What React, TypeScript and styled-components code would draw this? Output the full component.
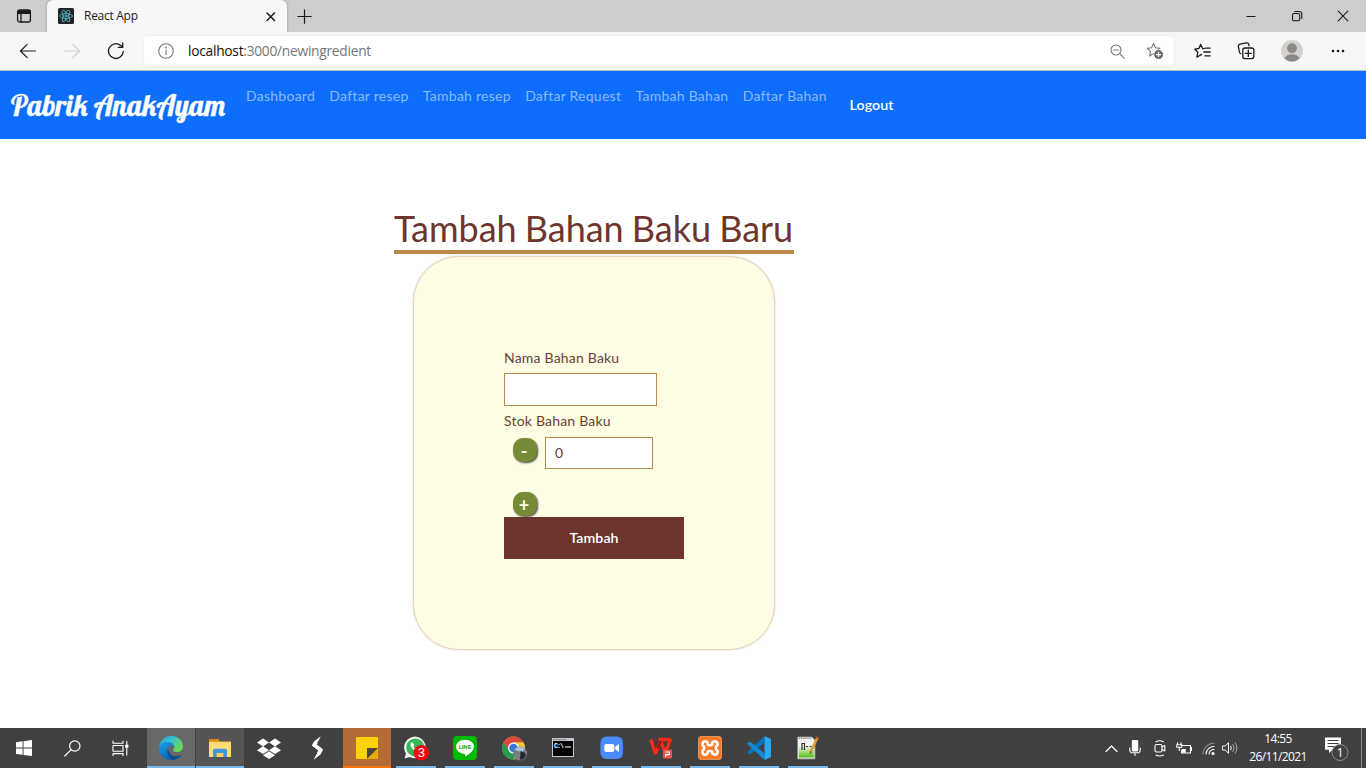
import React from 'react';
import styled, { createGlobalStyle } from 'styled-components';

const GlobalStyle = createGlobalStyle`
  *, *::before, *::after { box-sizing: border-box; }
  html, body { margin: 0; padding: 0; background: #fff; overflow: hidden; }
  svg { display: block; flex: none; }
  button, input { font-family: inherit; border-radius: 0; margin: 0; }
`;

const Screen = styled.div`
  display: flex;
  flex-direction: column;
  width: 1366px;
  height: 768px;
  font-family: Lato, 'Open Sans', sans-serif;
`;

/* ---------- browser chrome ---------- */
const TabStrip = styled.header`
  display: flex;
  height: 32px;
  background: #cdcdcd;
  font-family: 'Open Sans', 'Noto Sans', sans-serif;
`;

const Slot = styled.span<{ $w: number }>`
  display: flex;
  flex: none;
  align-items: center;
  justify-content: center;
  width: ${(p) => p.$w}px;
  height: 100%;
`;

const Tab = styled.div`
  display: flex;
  align-items: center;
  width: 240px;
  padding: 0 11px;
  background: #f7f7f7;
  border-radius: 6px 6px 0 0;
  box-shadow: 0 0 3px rgba(0, 0, 0, 0.3);
  clip-path: inset(0 -4px 0 -4px);
`;

const TabTitle = styled.span`
  flex: 1;
  margin-left: 10px;
  padding-bottom: 1px;
  font-size: 12px;
  letter-spacing: -0.28px;
  color: #1c1c1c;
`;

const WindowControls = styled.div`
  display: flex;
  margin-left: auto;
`;

const Toolbar = styled.div`
  display: flex;
  align-items: center;
  height: 39px;
  padding: 0 6px;
  background: #f7f7f7;
  border-bottom: 1px solid #b9bcc1;
  font-family: 'Open Sans', 'Noto Sans', sans-serif;
`;

const AddressBar = styled.div`
  display: flex;
  align-items: center;
  width: 1030px;
  height: 30px;
  margin: 0 6px;
  background: #fff;
  border-radius: 4px;
  box-shadow: 0 0 2px rgba(0, 0, 0, 0.08);
`;

const Url = styled.span`
  flex: 1;
  padding-bottom: 1px;
  font-size: 13.8px;
  letter-spacing: -0.28px;
  color: #767676;
`;

const UrlHost = styled.span`
  color: #111;
`;

/* ---------- site navigation ---------- */
const Navbar = styled.nav`
  display: flex;
  height: 68px;
  padding-left: 11px;
  background: #0d6efd;
`;

const Brand = styled.a`
  width: 235px;
  padding-top: 14px;
  font-family: Lobster, cursive;
  font-size: 28.8px;
  line-height: 40px;
  white-space: nowrap;
  color: #fff;
  -webkit-text-stroke: 0.35px #fff;
`;

const NavLinks = styled.div`
  display: flex;
  gap: 14.3px;
  padding-top: 14px;
`;

const NavLink = styled.a`
  font-size: 14px;
  letter-spacing: 0.26px;
  line-height: 22px;
  white-space: nowrap;
  color: #8abaff;
`;

const Logout = styled.a`
  margin-left: 22.6px;
  padding-top: 23px;
  font-size: 14.2px;
  font-weight: 600;
  letter-spacing: 0.1px;
  line-height: 22px;
  color: #fff;
`;

/* ---------- form ---------- */
const Main = styled.main`
  display: flex;
  flex: 1;
  flex-direction: column;
  align-items: center;
  width: 400px;
  margin-left: 394px;
  padding-top: 68px;
`;

const Title = styled.h1`
  width: 400px;
  height: 47px;
  margin: 0;
  border-bottom: 4px solid #ba884e;
  font-size: 36px;
  font-weight: 400;
  letter-spacing: -0.04px;
  word-spacing: -0.9px;
  line-height: 43px;
  white-space: nowrap;
  color: #6d352b;
`;

const Card = styled.form`
  display: flex;
  flex-direction: column;
  align-items: flex-start;
  width: 362px;
  height: 394px;
  margin-top: 2px;
  padding: 90px 90px 0;
  background: #fffde4;
  border: 1px solid #e6d2c2;
  border-radius: 46px;
  box-shadow: 0 0 2px rgba(186, 136, 100, 0.4);
`;

const Label = styled.label<{ $top?: number }>`
  margin-top: ${(p) => p.$top ?? 0}px;
  font-size: 14px;
  letter-spacing: 0.2px;
  line-height: 22px;
  color: #66403b;
`;

const Field = styled.input<{ $w: number; $h: number }>`
  width: ${(p) => p.$w}px;
  height: ${(p) => p.$h}px;
  padding: 0 8px 1px 9px;
  background: #fff;
  border: 1px solid #ba884e;
  font-size: 14px;
  color: #66403b;
  outline: none;
`;

const NameField = styled(Field)`
  margin-top: 4px;
`;

const StockRow = styled.div`
  display: flex;
  gap: 8px;
  margin: 5px 0 23px 9px;
`;

const RoundButton = styled.button<{ $top?: number; $left?: number }>`
  display: flex;
  align-items: center;
  justify-content: center;
  width: 24px;
  height: 24px;
  margin: ${(p) => p.$top ?? 0}px 0 0 ${(p) => p.$left ?? 0}px;
  padding: 2px 2px 0 0;
  background: #758b36;
  border: 0;
  border-radius: 10px;
  box-shadow: 1px 1px 2px rgba(40, 40, 40, 0.85);
  font-size: 18px;
  font-weight: 700;
  line-height: 20px;
  color: #fffde4;
`;

const Submit = styled.button`
  width: 180px;
  height: 42px;
  margin-top: 1px;
  padding: 0 0 1px;
  background: #6d352d;
  border: 0;
  font-size: 14.2px;
  font-weight: 600;
  letter-spacing: 0.05px;
  color: #fff;
`;

/* ---------- taskbar ---------- */
const Taskbar = styled.footer`
  display: flex;
  height: 40px;
  background: #404040;
  font-family: 'Open Sans', 'Noto Sans', sans-serif;
  color: #fff;
`;

const Apps = styled.div`
  display: flex;
  gap: 1px;
  margin-left: 3px;
`;

const AppButton = styled.div<{ $bg?: string; $bar?: string; $full?: boolean }>`
  display: flex;
  align-items: center;
  justify-content: center;
  width: 48px;
  height: 40px;
  background-color: ${(p) => p.$bg ?? 'transparent'};
  background-image: linear-gradient(${(p) => p.$bar ?? 'transparent'}, ${(p) => p.$bar ?? 'transparent'});
  background-size: ${(p) => (p.$full ? '48px' : '40px')} 2px;
  background-position: center bottom;
  background-repeat: no-repeat;
`;

const Tray = styled.div`
  display: flex;
  align-items: center;
  margin-left: auto;
`;

const Clock = styled.div`
  width: 74px;
  padding-left: 2px;
  font-size: 12px;
  line-height: 18px;
  letter-spacing: -0.6px;
  text-align: center;
  white-space: nowrap;
`;

const ShowDesktop = styled.div`
  width: 5px;
  height: 40px;
  margin-left: 1px;
  border-left: 1px solid #8b8b8b;
`;

type IconProps = { w: number; h?: number; color?: string; sw?: number; children: React.ReactNode };
const Icon = ({ w, h = w, color = '#1a1a1a', sw = 1.1, children }: IconProps) => (
  <svg width={w} height={h} viewBox={`0 0 ${w} ${h}`} fill="none" stroke={color} strokeWidth={sw} strokeLinecap="round" strokeLinejoin="round">
    {children}
  </svg>
);

const STAR = 'M7.5 1.5 L9.4 5.7 L14 6.2 L10.5 9.3 L11.5 14 L7.5 11.6 L3.5 14 L4.5 9.3 L1 6.2 L5.6 5.7 Z';

const BrowserTabs = () => (
  <TabStrip>
    <Slot $w={47}>
      <Icon w={16} sw={1.3}>
        <rect x="1.6" y="2" width="12.8" height="12" rx="2" />
        <path d="M2 3h12v2.4H2z" fill="#1a1a1a" />
        <path d="M5 5v9" />
      </Icon>
    </Slot>
    <Tab>
      <Icon w={16} color="#53b7d3" sw={0.8}>
        <rect width="16" height="16" rx="1.5" fill="#222" stroke="none" />
        <ellipse cx="8" cy="8" rx="6.4" ry="2.5" />
        <ellipse cx="8" cy="8" rx="6.4" ry="2.5" transform="rotate(60 8 8)" />
        <ellipse cx="8" cy="8" rx="6.4" ry="2.5" transform="rotate(120 8 8)" />
        <circle cx="8" cy="8" r="1" fill="#53b7d3" />
      </Icon>
      <TabTitle>React App</TabTitle>
      <Icon w={11} sw={1.5}>
        <path d="M2 2l7.5 7.5M9.5 2L2 9.5" />
      </Icon>
    </Tab>
    <Slot $w={35}>
      <Icon w={15} sw={1.2}>
        <path d="M7.5 .8v13.4M.8 7.5h13.4" />
      </Icon>
    </Slot>
    <WindowControls>
      <Slot $w={46}>
        <Icon w={12} sw={1}><path d="M1.5 6.5h9" strokeLinecap="butt" /></Icon>
      </Slot>
      <Slot $w={46}>
        <Icon w={12} sw={1.1}>
          <rect x="1.5" y="3.5" width="7.2" height="7.2" rx="1.5" />
          <path d="M3.8 1.5H8.5a2.3 2.3 0 0 1 2.3 2.3v4.7" />
        </Icon>
      </Slot>
      <Slot $w={46}>
        <Icon w={12} sw={1.1}><path d="M1.2 1.2l9.6 9.6M10.8 1.2l-9.6 9.6" /></Icon>
      </Slot>
    </WindowControls>
  </TabStrip>
);

const BrowserToolbar = () => (
  <Toolbar>
    <Slot $w={44}><Icon w={18} sw={1.2}><path d="M16.5 9h-15M8.2 2.3L1.5 9l6.7 6.7" /></Icon></Slot>
    <Slot $w={44}><Icon w={18} sw={1.2} color="#cfcfcf"><path d="M1.5 9h15M9.8 2.3L16.5 9l-6.7 6.7" /></Icon></Slot>
    <Slot $w={44}>
      <Icon w={18} sw={1.3}>
        <path d="M16.3 9.5A7.4 7.4 0 1 1 13.7 3.4L15.5 5" />
        <path d="M15.7 1v4.4h-4.4" />
      </Icon>
    </Slot>
    <AddressBar>
      <Slot $w={44}>
        <Icon w={16} color="#767676">
          <circle cx="8" cy="8" r="7.3" />
          <path d="M8 7v4.5" />
          <circle cx="8" cy="4.6" r=".4" fill="#767676" />
        </Icon>
      </Slot>
      <Url><UrlHost>localhost</UrlHost>:3000/newingredient</Url>
      <Slot $w={37}>
        <Icon w={15} color="#767676">
          <circle cx="6" cy="6" r="5" />
          <path d="M9.7 9.7l4.5 4.5M3.7 6h4.6" />
        </Icon>
      </Slot>
      <Slot $w={38}>
        <Icon w={18} color="#767676">
          <path d={STAR} />
          <circle cx="12.6" cy="12.6" r="5" fill="#fff" stroke="none" />
          <circle cx="12.6" cy="12.6" r="4.5" fill="#696969" stroke="none" />
          <path d="M12.6 10.4v4.4M10.4 12.6h4.4" stroke="#fff" />
        </Icon>
      </Slot>
    </AddressBar>
    <Slot $w={44}>
      <Icon w={17} sw={1.3}>
        <path d="M10.2 5.6L8.6 5.5 6.6 1.4 4.9 5.5.8 6.2l3 3.1-.9 4.9 4.6-2.8" />
        <path d="M11 5.2h5.2M9.8 9h6.4M11 12.8h5.2" />
      </Icon>
    </Slot>
    <Slot $w={44}>
      <Icon w={18} sw={1.3}>
        <path d="M3.6 11.7A2 2 0 0 1 2.4 10L1.4 4.6A2 2 0 0 1 3 2.2l6.5-1.3a2 2 0 0 1 2.3 1.5l.3 1.4" />
        <rect x="5.8" y="6" width="11" height="10.6" rx="2" />
        <path d="M11.3 8.2v6.2M8.2 11.3h6.2" />
      </Icon>
    </Slot>
    <Slot $w={48}>
      <Icon w={22}>
        <circle cx="11" cy="11" r="11" fill="#d3d0cc" stroke="none" />
        <circle cx="11" cy="8.2" r="4.9" fill="#8c8884" stroke="none" />
        <path d="M3.6 18.6c1-3 4-4.3 7.4-4.3s6.4 1.3 7.4 4.3A11 11 0 0 1 3.6 18.6z" fill="#8c8884" stroke="none" />
      </Icon>
    </Slot>
    <Slot $w={44}>
      <Icon w={14} h={4}>
        <g fill="#1a1a1a" stroke="none">
          <circle cx="2" cy="2" r="1.3" /><circle cx="7" cy="2" r="1.3" /><circle cx="12" cy="2" r="1.3" />
        </g>
      </Icon>
    </Slot>
  </Toolbar>
);

const links = ['Dashboard', 'Daftar resep', 'Tambah resep', 'Daftar Request', 'Tambah Bahan', 'Daftar Bahan'];
const BLUE = '#76b9ed';

const SystemButtons = () => (
  <>
    <Slot $w={48}>
      <Icon w={16}><path d="M0 2.2L6.6 1.3V7.6H0zM7.5 1.2L16 0v7.6H7.5zM0 8.5h6.6v6.3L0 13.9zM7.5 8.5H16V16l-8.5-1.1z" fill="#fff" stroke="none" /></Icon>
    </Slot>
    <Slot $w={48}>
      <Icon w={17} color="#fff" sw={1.2}><circle cx="10.8" cy="6" r="5.2" /><path d="M7 9.8L.8 16" /></Icon>
    </Slot>
    <Slot $w={48}>
      <Icon w={17} color="#fff" sw={1.1}>
        <path d="M1 .8v2.4h10V.8M1 16v-2.4h10V16M1 5.5h10v5.8H1zM14.8 1v14.5" strokeLinecap="butt" />
        <path d="M13.2 4.7h3.2v3h-3.2z" fill="#fff" stroke="none" />
      </Icon>
    </Slot>
  </>
);

const TaskbarApps = () => (
  <Apps>
    <AppButton $bg="#686868" $bar={BLUE} $full>
      <Icon w={24}>
        <defs>
          <linearGradient id="edgeTop" x1="0" y1="0" x2="1" y2=".45"><stop stopColor="#2b9fe0" /><stop offset=".55" stopColor="#36c5cd" /><stop offset="1" stopColor="#68da58" /></linearGradient>
          <linearGradient id="edgeLow" x1="0" y1="0" x2=".7" y2="1"><stop stopColor="#1aa1e6" /><stop offset="1" stopColor="#0a58b4" /></linearGradient>
        </defs>
        <g stroke="none">
          <path d="M.2 11.2C.8 4.7 5.7 0 12 0c7 0 12 4.9 12 10.2 0 3.5-2.7 5.9-6.1 5.9-2.5 0-3.9-.9-3.9-1.9 0-.8 1.2-1.2 1.2-3.2 0-3-3.3-5.1-7.2-5.1-3.7 0-6.5 2-7.8 5.3z" fill="url(#edgeTop)" />
          <path d="M.1 11.5C1.2 8 4.6 5.9 8.1 5.9c3.8 0 7 2 7.1 4.9-1-1.2-2.3-1.7-3.7-1.2C8.3 10.8 8 16 11.2 19.2c2.8 2.7 7.3 2.9 11 .1C20.5 22 16.6 24 12.3 24 5 24-.3 18.5.1 11.5z" fill="url(#edgeLow)" />
          <path d="M9.3 12.2C7.2 16 8.4 22 14 23.9c3.6-.4 6.8-2.5 8.6-5.2-5.2 2.5-10.3 1.7-12.3-2.2-.8-1.5-1-2.8-1-4.3z" fill="#104f91" />
        </g>
      </Icon>
    </AppButton>
    <AppButton $bg="#555" $bar={BLUE} $full>
      <Icon w={22} h={20}>
        <g stroke="none">
          <path d="M0 1.5h9l1.5 2H22V19H0z" fill="#f5bd3c" />
          <path d="M0 1h9.3l1 1.5-1 1H0z" fill="#d98b09" />
          <path d="M0 4.2h22V19H0z" fill="#ffda75" />
          <path d="M4 19v-6.5c0-1 .7-1.7 1.7-1.7h10.6c1 0 1.7.7 1.7 1.7V19h-3.8v-4H7.8v4z" fill="#3c97dc" />
          <path d="M7.8 15h6.4v4H7.8z" fill="#ffd15c" />
        </g>
      </Icon>
    </AppButton>
    <AppButton>
      <Icon w={24} h={21}>
        <path d="M6 .6l6 3.9-6 3.9-6-3.9zM18 .6l6 3.9-6 3.9-6-3.9zM6 8.3l6 3.9-6 3.9-6-3.9zM18 8.3l6 3.9-6 3.9-6-3.9zM6 17.2l6-3.9 6 3.9-6 3.7z" fill="#fff" stroke="none" />
      </Icon>
    </AppButton>
    <AppButton>
      <Icon w={14} h={24}>
        <path d="M9.8.3L3 5.5.8 9.5 7.2 14.6 2.7 23.7 9.5 18.5 12.2 13.5 5.8 8.6z" fill="#fff" stroke="none" />
        <path d="M2.2 16l3.8 1.8M6.8 6.3l4 2" stroke="#404040" strokeWidth=".8" />
      </Icon>
    </AppButton>
    <AppButton $bg="#b46b35" $bar="#ff7300" $full>
      <Icon w={22}>
        <g stroke="none">
          <rect width="22" height="22" rx="1" fill="#fcd309" />
          <path d="M11 22L22 11v11z" fill="#eba904" />
          <path d="M11 11h11L11 22z" fill="#494541" />
        </g>
      </Icon>
    </AppButton>
    <AppButton $bar={BLUE}>
      <svg width="26" height="26" viewBox="0.5 0 26 26">
        <path d="M2 23.5l1.4-5.1A10.8 10.8 0 1 1 7.4 22z" fill="#f1f4ef" />
        <circle cx="12.8" cy="12.4" r="9" fill="#35b957" />
        <path d="M9.8 7.2c-1 0-2 1.1-1.8 2.6.5 3.5 4.2 7 7.8 7.3 1.4 0 2.5-1.2 2.4-2.4l-2.6-1.3-1.2 1.3c-1.8-.8-3-2-3.6-3.5l1-1.3z" fill="#fff" />
        <circle cx="18.8" cy="17.7" r="7.8" fill="#f30612" />
        <text x="18.8" y="22.3" fill="#fff" fontFamily="Liberation Sans, sans-serif" fontSize="13" textAnchor="middle">3</text>
      </svg>
    </AppButton>
    <AppButton $bar={BLUE}>
      <svg width="24" height="24" viewBox="0 0 24 24">
        <rect width="24" height="24" rx="4" fill="#00b900" />
        <path d="M12 3.7c5 0 9 3 9 7 0 3.5-4 7-9 10 .5-2 .4-2.8-1-3-4.5-.6-8-3.4-8-7 0-4 4-7 9-7z" fill="#fff" />
        <text x="12" y="13.1" fill="#00a900" fontFamily="Liberation Sans, sans-serif" fontWeight="700" fontSize="5.6" textAnchor="middle">LINE</text>
      </svg>
    </AppButton>
    <AppButton $bar={BLUE}>
      <svg width="26" height="25" viewBox="-.5 0 26 25">
        <circle cx="12" cy="12" r="11.4" fill="#e5b72f" />
        <path d="M2.1 6.3A11.4 11.4 0 0 0 12 23.4L16 14l-8-1z" fill="#249b50" />
        <path d="M12 6.3h9.9A11.4 11.4 0 0 1 14 23.2l3-9z" fill="#f5c732" />
        <path d="M12 6.3h9.9A11.4 11.4 0 0 0 2.1 6.3L7 14z" fill="#d94a3c" />
        <circle cx="12" cy="12" r="5.5" fill="#fff" /><circle cx="12" cy="12" r="4.3" fill="#3879da" />
        <circle cx="18.5" cy="17.5" r="7" fill="#777f84" />
        <path d="M13 13.5c3-3.5 7-3 10.5-1L21 16l-5-1z" fill="#a9c5da" />
        <path d="M19 15l4 1.5 1.5 3-3 4h-3z" fill="#26272b" />
      </svg>
    </AppButton>
    <AppButton $bar={BLUE}>
      <svg width="24" height="20" viewBox="-1 0 24 20">
        <rect width="22" height="19" fill="#c3c8cf" /><path d="M1 3h20v15H1z" fill="#050505" />
        <path d="M1 1h13v1.2H1z" fill="#8a98a6" />
        <text x="2" y="9.5" fill="#fff" fontFamily="Liberation Mono, monospace" fontWeight="700" fontSize="6.5" textLength="10">C:\</text>
        <path d="M13 9h6" stroke="#fff" />
      </svg>
    </AppButton>
    <AppButton $bar={BLUE}>
      <svg width="24" height="24" viewBox="0 0 24 24">
        <rect x=".5" y=".5" width="22.5" height="22.5" rx="6" fill="#4a8cff" /><rect x="4.3" y="8" width="10" height="8" rx="2" fill="#fff" /><path d="M15.2 10.7L19 8v8l-3.8-2.7z" fill="#fff" />
      </svg>
    </AppButton>
    <AppButton $bar={BLUE}>
      <svg width="24" height="22" viewBox="0 0 24 22">
        <path d="M1.8 2.5l4.7 14.5 5.2-13 4.6 12L21.5 2.5H9.5" fill="none" stroke="#f62b18" strokeWidth="3.3" strokeLinejoin="bevel" />
        <path d="M11.7 4l-3 7.5" stroke="#a80b13" strokeWidth="2.2" />
        <rect x="14" y="12.5" width="9" height="9" rx="1" fill="#e65351" />
        <path d="M16.5 15h3.8v2.7h-3.5v2" stroke="#fff" fill="none" strokeWidth="1.2" />
      </svg>
    </AppButton>
    <AppButton $bar={BLUE}>
      <svg width="24" height="24" viewBox="0 0 24 24">
        <rect x=".5" y=".5" width="23" height="23" rx="2.5" fill="#f47b29" stroke="#e7925a" />
        <path d="M9.8 8.8a2.700 2.700 0 1 0-4 1.600q.9 1.600 0 3.200a2.700 2.700 0 1 0 4 1.900q2.200-1 4.400 0a2.700 2.700 0 1 0 4-1.900q-.9-1.600 0-3.200a2.700 2.700 0 1 0-4-1.600q-2.200 1-4.400 0z" fill="none" stroke="#fff" strokeWidth="2.600" strokeLinejoin="round" />
      </svg>
    </AppButton>
    <AppButton $bar={BLUE}>
      <svg width="24" height="24" viewBox="0 0 24 24">
        <path d="M17.5 0L24 3v18l-6.5 3z" fill="#2aa7f2" />
        <path d="M17.5 0v6.5L3 18.5 0 16.2z" fill="#0874bd" />
        <path d="M0 7.8L3 5.5l14.5 12V24z" fill="#1489d3" />
      </svg>
    </AppButton>
    <AppButton $bar={BLUE}>
      <svg width="24" height="24" viewBox="0 0 24 24">
        <defs><linearGradient id="note" x1="0" y1="0" x2="0" y2="1"><stop offset=".3" stopColor="#f2f5ef" /><stop offset="1" stopColor="#55bd0c" /></linearGradient></defs>
        <path d="M1.5 1h14.5l3 3v19H1.5z" fill="#f2f2ee" stroke="#888" />
        <path d="M2.8 5h15v16.500h-15z" fill="url(#note)" />
        <path d="M2.8 2.500h13" stroke="#888" strokeDasharray="1.2 1" />
        <path d="M6 14V7.500h2.500V14M10 10.500h2M13.500 10.500h2" fill="none" stroke="#333" strokeWidth="1.2" />
        <path d="M21 2.500L14.500 16" stroke="#e3a128" strokeWidth="2.6" /><path d="M21.900.8l-.8 1.800" stroke="#cd5242" strokeWidth="2.7" /><path d="M14.500 15l-1.200 3.500 2.800-2.500z" fill="#77512c" />
      </svg>
    </AppButton>
  </Apps>
);

const SystemTray = () => (
  <Tray>
    <Slot $w={23}><Icon w={13} h={9} color="#fff" sw={1.2}><path d="M1 7.5L6.5 2 12 7.5" /></Icon></Slot>
    <Slot $w={24}>
      <Icon w={12} h={16} color="#fff" sw={1.1}>
        <rect x="2.8" y="0" width="6.4" height="11.5" rx="1" fill="#fff" stroke="none" />
        <path d="M.8 8v2.3a2.5 2.5 0 0 0 2.5 2.5h5.4a2.5 2.5 0 0 0 2.5-2.5V8M6 12.8v2.7" />
      </Icon>
    </Slot>
    <Slot $w={25}>
      <Icon w={12} h={17} color="#fff" sw={1.1}>
        <rect x="1" y="4.5" width="7" height="7.5" rx="1.5" /><path d="M8 7l2.8-1.5v5.5L8 9.5M2 1.8Q5.5-.2 9.5 1.8M2 15Q5.5 17 9.5 15" />
      </Icon>
    </Slot>
    <Slot $w={24}>
      <Icon w={16} h={13} color="#fff" sw={1.1}>
        <path d="M5.5 3.5h9v7.5h-9V8M15.5 5.5v3M1.5.8v2M5 .8v2M.8 2.8h5v2.5H.8zM3.3 5.3v3.2" strokeLinejoin="miter" />
        <path d="M5.8 7h4v3.7h-4z" fill="#fff" stroke="none" />
      </Icon>
    </Slot>
    <Slot $w={24}>
      <Icon w={13} color="#898989" sw={1.1}>
        <path d="M1 12A11 11 0 0 1 12 1.2" />
        <g stroke="#fff"><path d="M4 12A8 8 0 0 1 12 4.5M7 12a5 5 0 0 1 5-4.5" /><circle cx="11" cy="11.5" r="1" fill="#fff" /></g>
      </Icon>
    </Slot>
    <Slot $w={20}>
      <Icon w={16} h={14} color="#fff" sw={1}>
        <path d="M.7 5h2.5l3.3-3.2v10.4L3.2 9H.7zM8.8 5.2Q10 7 8.8 8.8" />
        <path d="M11 3.5q2.5 3.5 0 7M13.2 1.8q3.6 5.2 0 10.4" stroke="#aaa" />
      </Icon>
    </Slot>
    <Clock>14:55<br />26/11/2021</Clock>
    <Slot $w={46}>
      <svg width="27" height="27" viewBox="0 -2 27 27">
        <path d="M1 .5h16v12.3H8.500L5 16v-3.200H1z" fill="#fff" />
        <path d="M3.500 3.500h11M3.500 6.500h11M3.500 9.500h7" stroke="#404040" />
        <circle cx="16" cy="15.500" r="8" fill="#404040" stroke="#8d8d8d" />
        <text x="16" y="20" fill="#fff" fontFamily="Open Sans, sans-serif" fontSize="12.5" textAnchor="middle">1</text>
      </svg>
    </Slot>
    <ShowDesktop />
  </Tray>
);

export default function App() {
  return (
    <>
      <GlobalStyle />
      <Screen>
        <BrowserTabs />
        <BrowserToolbar />
        <Navbar>
          <Brand>Pabrik AnakAyam</Brand>
          <NavLinks>{links.map((l) => <NavLink key={l}>{l}</NavLink>)}</NavLinks>
          <Logout>Logout</Logout>
        </Navbar>
        <Main>
          <Title>Tambah Bahan Baku Baru</Title>
          <Card onSubmit={(e) => e.preventDefault()}>
            <Label>Nama Bahan Baku</Label>
            <NameField $w={153} $h={33} />
            <Label $top={4}>Stok Bahan Baku</Label>
            <StockRow>
              <RoundButton type="button" $top={1}>-</RoundButton>
              <Field $w={108} $h={32} defaultValue="0" />
            </StockRow>
            <RoundButton type="button" $left={9}>+</RoundButton>
            <Submit>Tambah</Submit>
          </Card>
        </Main>
        <Taskbar>
          <SystemButtons />
          <TaskbarApps />
          <SystemTray />
        </Taskbar>
      </Screen>
    </>
  );
}
